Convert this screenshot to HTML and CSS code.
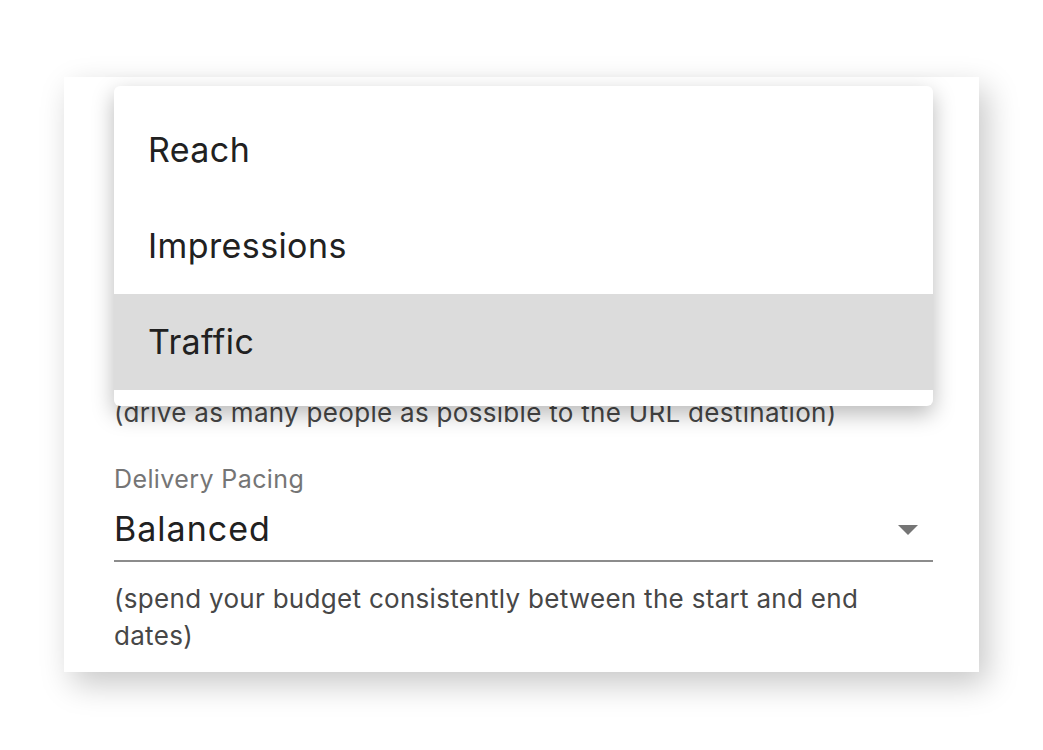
FILE: index.html
```html
<!DOCTYPE html>
<html>
<head>
    <title>Campaign delivery</title>
    <meta charset="utf-8">
    <meta name="viewport" content="width=device-width, initial-scale=1">
    <link rel="stylesheet" href="styles.css">
</head>
<body>
<div class="page">
    <div class="card">
        <!-- Objective field (menu is open over it) -->
        <div class="field">
            <div class="field-label">Objective</div>
            <div class="field-select">
                <span class="field-value">Traffic</span>
                <span class="arrow"></span>
            </div>
            <div class="field-help">(drive as many people as possible to the URL destination)</div>
        </div>

        <!-- Delivery pacing field -->
        <div class="field">
            <div class="field-label">Delivery Pacing</div>
            <div class="field-select">
                <span class="field-value">Balanced</span>
                <span class="arrow"></span>
            </div>
            <div class="field-help">(spend your budget consistently between the start and end dates)</div>
        </div>

        <!-- Open objective menu -->
        <ul class="menu">
            <li class="menu-item">Reach</li>
            <li class="menu-item">Impressions</li>
            <li class="menu-item selected">Traffic</li>
        </ul>
    </div>
</div>
</body>
</html>
```

FILE: styles.css
```css
/* Body styling */
body {
    font-family: Inter, 'Noto Sans', sans-serif;
    margin: 0;
    background-color: #ffffff;
    color: #212121;
}

.page {
    padding: 77px 0 70px 64px;
}

/* Card styling */
.card {
    position: relative;
    width: 819px;
    padding: 200px 46px 18px 50px;
    background-color: #ffffff;
    box-shadow: 8px 12px 30px rgba(0, 0, 0, 0.22);
}

/* Field styling */
.field + .field {
    margin-top: 32px;
}

.field-label {
    font-size: 25px;
    line-height: 32px;
    letter-spacing: 0.4px;
    color: #757575;
}

.field-select {
    display: flex;
    justify-content: space-between;
    align-items: center;
    padding: 14px 15px 11px 0;
    border-bottom: 2px solid #8c8c8c;
}

.field-value {
    font-size: 34px;
    line-height: 40px;
    letter-spacing: 1px;
    color: #212121;
}

.arrow {
    width: 0;
    height: 0;
    border-left: 10px solid transparent;
    border-right: 10px solid transparent;
    border-top: 10px solid #757575;
    margin-top: 2px;
}

.field-help {
    margin-top: 18px;
    font-size: 26px;
    line-height: 37px;
    letter-spacing: 0.3px;
    color: #474747;
}

/* Menu styling */
.menu {
    position: absolute;
    top: 9px;
    left: 50px;
    width: 819px;
    margin: 0;
    padding: 16px 0;
    list-style: none;
    background-color: #ffffff;
    border-radius: 6px;
    box-shadow: 0 8px 22px rgba(0, 0, 0, 0.28);
}

.menu-item {
    height: 96px;
    line-height: 96px;
    padding-left: 34px;
    font-size: 34px;
    letter-spacing: 0.4px;
    color: #212121;
}

.menu-item.selected {
    background-color: #dcdcdc;
}
```
